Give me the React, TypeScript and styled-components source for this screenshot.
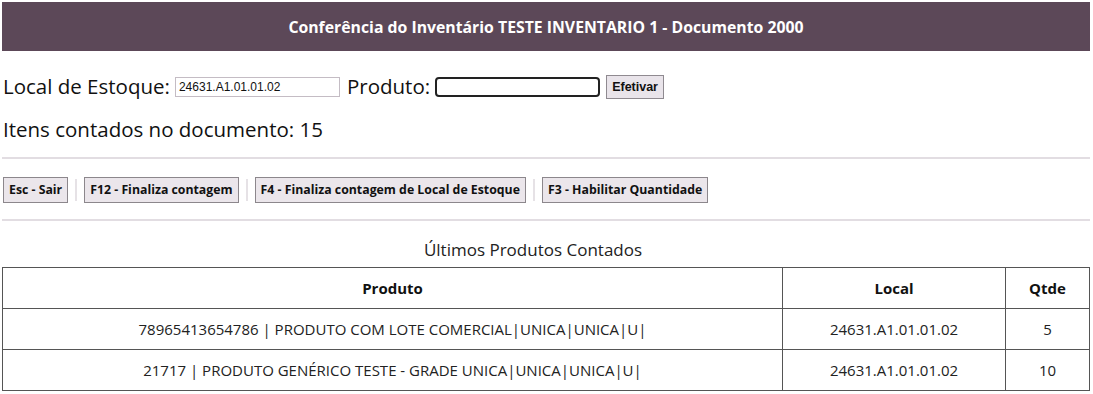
import React from "react";
import styled, { createGlobalStyle } from "styled-components";

const Global = createGlobalStyle`
  html, body { margin: 0; padding: 0; background: #fff; }
  body { font-family: "Open Sans", "Noto Sans", sans-serif; color: #111; }
`;

const Page = styled.div`
  padding: 2px 3px 0 2px;
  display: flex;
  flex-direction: column;
`;

const Header = styled.div`
  height: 49px;
  background: #5c4858;
  color: #fff;
  display: flex;
  align-items: center;
  justify-content: center;
  font-weight: 700;
  font-size: 15.8px;
`;

const FormRow = styled.div`
  display: flex;
  align-items: center;
  margin-top: 24px;
  padding-left: 1px;
  height: 24px;
  font-size: 20.5px;
`;

const Label = styled.span<{ $ml?: number }>`
  margin-left: ${(p) => p.$ml ?? 0}px;
  margin-right: 5px;
  white-space: nowrap;
  position: relative;
  top: -1px;
`;

const TextInput = styled.input<{ $focused?: boolean }>`
  box-sizing: border-box;
  width: 165px;
  height: 20px;
  font-family: "Liberation Sans", Arial, sans-serif;
  font-size: 12px;
  padding: 1px 3px;
  color: #111;
  border: ${(p) => (p.$focused ? "2px solid #222" : "1px solid #c4bcc4")};
  border-radius: ${(p) => (p.$focused ? "4px" : "0")};
  outline: none;
  background: #fff;
`;

const SubmitButton = styled.button`
  box-sizing: border-box;
  margin-left: 6px;
  height: 24px;
  padding: 0 5px;
  font-family: "Liberation Sans", Arial, sans-serif;
  font-weight: 700;
  font-size: 12.5px;
  color: #111;
  background: #e9e4ea;
  border: 1px solid #8f8a90;
`;

const Count = styled.div`
  font-size: 20.5px;
  margin-top: 16px;
  padding-left: 1px;
  line-height: 28px;
  margin-bottom: 14px;
`;

const Rule = styled.hr`
  border: 0;
  border-top: 2px solid #e2dde2;
  margin: 0;
`;

const Toolbar = styled.div`
  display: flex;
  align-items: center;
  padding-left: 1px;
  height: 60px;
  padding-top: 1px;
  box-sizing: border-box;
`;

const ActionButton = styled.button`
  box-sizing: border-box;
  height: 26px;
  padding: 0 5px;
  font-family: "Open Sans", sans-serif;
  font-weight: 700;
  font-size: 12.3px;
  color: #111;
  background: #ebe6eb;
  border: 1px solid #8c878c;
`;

const Divider = styled.span`
  width: 2px;
  height: 22px;
  background: #e6e2e6;
  margin: 0 7px;
`;

const Caption = styled.div`
  text-align: center;
  font-size: 17px;
  margin-top: 17px;
  margin-bottom: 6px;
  padding-right: 26px;
  line-height: 23px;
  color: #222;
`;

const Table = styled.table`
  border-collapse: collapse;
  table-layout: fixed;
  width: 100%;
  font-size: 15px;
  color: #222;
`;

const Th = styled.th<{ $w?: number }>`
  border: 1.5px solid #555;
  height: 38px;
  padding: 1px;
  font-weight: 700;
  color: #111;
  width: ${(p) => (p.$w ? `${p.$w}px` : "auto")};
`;

const Td = styled.td`
  border: 1.5px solid #555;
  height: 38px;
  padding: 1px;
  text-align: center;
`;

const rows = [
  { produto: "78965413654786 | PRODUTO COM LOTE COMERCIAL|UNICA|UNICA|U|", local: "24631.A1.01.01.02", qtde: "5" },
  { produto: "21717 | PRODUTO GENÉRICO TESTE - GRADE UNICA|UNICA|UNICA|U|", local: "24631.A1.01.01.02", qtde: "10" },
];

export default function App() {
  return (
    <>
      <Global />
      <Page>
        <Header>Conferência do Inventário TESTE INVENTARIO 1 - Documento 2000</Header>
        <FormRow>
          <Label>Local de Estoque:</Label>
          <TextInput defaultValue="24631.A1.01.01.02" />
          <Label $ml={7}>Produto:</Label>
          <TextInput $focused />
          <SubmitButton>Efetivar</SubmitButton>
        </FormRow>
        <Count>Itens contados no documento: 15</Count>
        <Rule />
        <Toolbar>
          <ActionButton>Esc - Sair</ActionButton>
          <Divider />
          <ActionButton>F12 - Finaliza contagem</ActionButton>
          <Divider />
          <ActionButton>F4 - Finaliza contagem de Local de Estoque</ActionButton>
          <Divider />
          <ActionButton>F3 - Habilitar Quantidade</ActionButton>
        </Toolbar>
        <Rule />
        <Caption>Últimos Produtos Contados</Caption>
        <Table>
          <thead>
            <tr>
              <Th>Produto</Th>
              <Th $w={220}>Local</Th>
              <Th $w={81}>Qtde</Th>
            </tr>
          </thead>
          <tbody>
            {rows.map((r) => (
              <tr key={r.produto}>
                <Td>{r.produto}</Td>
                <Td>{r.local}</Td>
                <Td>{r.qtde}</Td>
              </tr>
            ))}
          </tbody>
        </Table>
      </Page>
    </>
  );
}
